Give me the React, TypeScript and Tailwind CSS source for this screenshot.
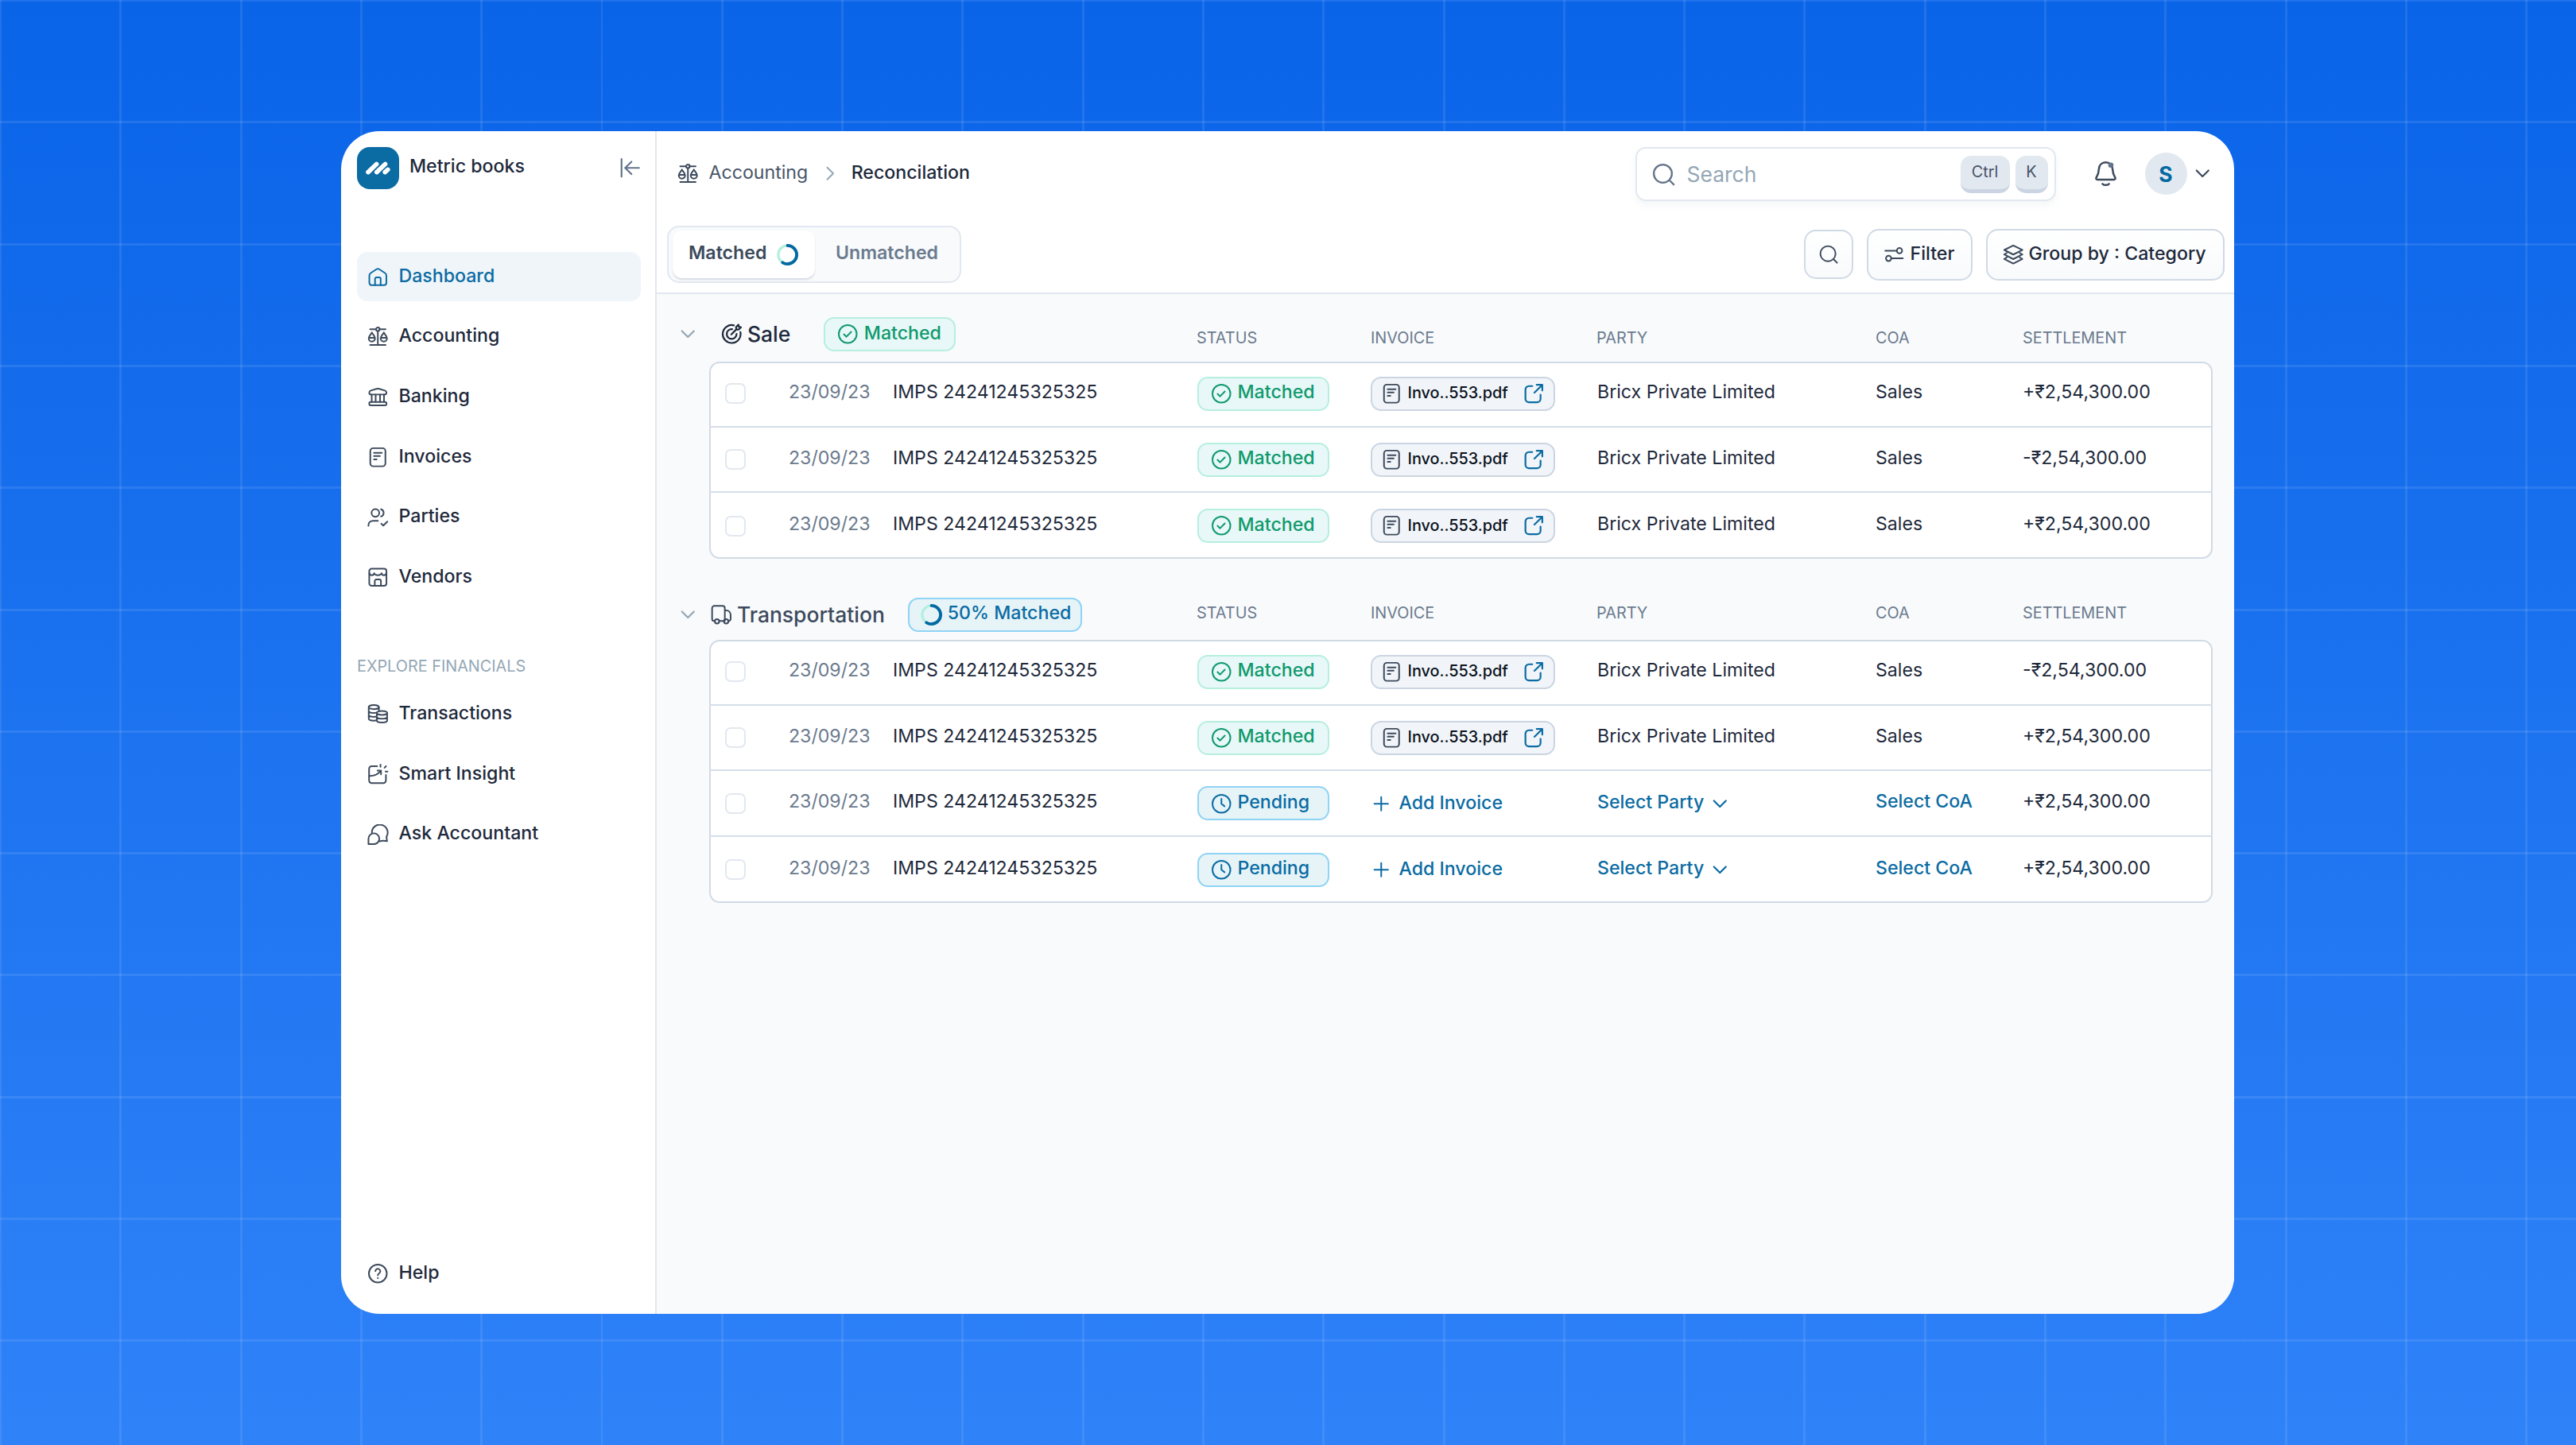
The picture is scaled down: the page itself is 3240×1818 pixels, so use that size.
import React from 'react';
import clsx from 'clsx';

type IconProps = { className?: string; children?: React.ReactNode };

function Icon({ className, children }: IconProps) {
  return (
    <svg
      viewBox="0 0 24 24"
      fill="none"
      stroke="currentColor"
      strokeWidth="1.8"
      strokeLinecap="round"
      strokeLinejoin="round"
      className={clsx('shrink-0', className?.includes('size-') ? '' : 'size-[26.5px]', className)}
    >
      {children}
    </svg>
  );
}

const HomeIcon = (p: IconProps) => (
  <Icon {...p}>
    <path d="M2.3 10.6c0-1.2.6-2.3 1.6-2.9l6.5-4.3a3 3 0 0 1 3.2 0l6.5 4.3c1 .6 1.6 1.7 1.6 2.9v8.2a2.8 2.8 0 0 1-2.8 2.8H5.1a2.8 2.8 0 0 1-2.8-2.8Z" />
    <path d="M8.8 21.6v-7.4a1.6 1.6 0 0 1 1.6-1.6h3.2a1.6 1.6 0 0 1 1.6 1.6v7.4" />
  </Icon>
);

const ScaleIcon = (p: IconProps) => (
  <Icon {...p}>
    <circle cx="12" cy="3.9" r="2" />
    <path d="M3.2 3.9H10M14 3.9h6.8M12 6v15.6M3.2 21.8h17.6" />
    <path d="M5.2 7.6c-.9 2.300-3.600 4-3.600 6.600a3.600 3.600 0 0 0 7.200 0c0-2.600-2.700-4.300-3.600-6.600ZM1.800 13.600h6.800" />
    <path d="M18.800 7.600c-.9 2.300-3.600 4-3.600 6.600a3.600 3.600 0 0 0 7.200 0c0-2.600-2.700-4.300-3.600-6.600ZM15.400 13.600h6.800" />
  </Icon>
);

const BankIcon = (p: IconProps) => (
  <Icon {...p}>
    <path d="M2.2 7.2c0-1.2.7-2 1.8-2.3l6.4-1.9a5.5 5.5 0 0 1 3.2 0L20 4.900c1.100.3 1.800 1.100 1.800 2.300 0 1.400-.8 2.200-2.200 2.200H4.400c-1.400 0-2.200-.8-2.200-2.200Z" />
    <rect x="2.2" y="17.8" width="19.6" height="4" rx="1.6" />
    <path d="M5 9.6v8M9.5 9.6v8M14.5 9.6v8M19 9.6v8" />
  </Icon>
);

const InvoiceIcon = (p: IconProps) => (
  <Icon {...p}>
    <rect x="3.4" y="1.7" width="17.2" height="20.6" rx="3.2" />
    <path d="M7.6 7h9M7.6 10.7h6.800M7.600 14.400h3" />
  </Icon>
);

const PartiesIcon = (p: IconProps) => (
  <Icon {...p}>
    <circle cx="9.2" cy="6.6" r="4.4" />
    <path d="M15.6 2.5a4.3 4.3 0 0 1 0 8.2M1.3 21.4v-.8c0-3 2.2-5 5.2-5h5.6M15.9 18.9l2.3 2.2 4.6-4.6" />
  </Icon>
);

const VendorIcon = (p: IconProps) => (
  <Icon {...p}>
    <rect x="2.2" y="2.2" width="19.6" height="19.6" rx="2.8" />
    <path d="M2.4 7.500c.3 1.500 1.400 2.200 2.700 2.200S7.500 9 7.800 7.500C8.300 9 9.500 9.700 12 9.700s3.700-.7 4.200-2.200c.3 1.500 1.400 2.200 2.700 2.200s2.400-.7 2.700-2.200" />
    <path d="M8.5 21.6v-5.3a1.8 1.8 0 0 1 1.8-1.8h3.4a1.8 1.8 0 0 1 1.8 1.8v5.3" />
  </Icon>
);

const CoinsIcon = (p: IconProps) => (
  <Icon {...p}>
    <ellipse cx="7.4" cy="4.2" rx="5.8" ry="2.3" />
    <path d="M1.6 4.2v13c0 1.4 2.3 2.4 5.8 2.4 1.2 0 2.3-.1 3.2-.4M13.2 4.2v3.6M1.6 8.6c0 1.3 2.6 2.3 5.8 2.3 1.2 0 2.3-.1 3.2-.4M1.6 13c0 1.3 2.6 2.3 5.8 2.3 1.2 0 2.3-.1 3.2-.4" />
    <ellipse cx="16.7" cy="10.8" rx="5.9" ry="2.3" />
    <path d="M10.8 10.8v8.7c0 1.3 2.6 2.3 5.9 2.3s5.9-1 5.9-2.3v-8.7M10.8 15.2c0 1.3 2.6 2.3 5.9 2.3s5.9-1 5.9-2.3" />
  </Icon>
);

const InsightIcon = (p: IconProps) => (
  <Icon {...p}>
    <path d="M11.2 2.7H5a3 3 0 0 0-3 3v13.2a3 3 0 0 0 3 3h13.2a3 3 0 0 0 3-3v-6.2" />
    <path d="M2.2 13.9c5.4.2 9.3-1.6 13-5.6M11.6 7.7h4v4.3M15 .9v2.5M21.3 2.7l-1.7 1.7M20.8 8.8h2.2" />
  </Icon>
);

const ChatIcon = (p: IconProps) => (
  <Icon {...p}>
    <path d="M5.2 9.5a9 9 0 1 1 16.9 4.300c-.3.600-.3 1-.2 1.600l.6 3.900-4-.5c-1.500-.2-2.500.5-4.600.6" />
    <path d="M1.3 22.7v-6.2a6.2 6.2 0 1 1 6.2 6.2Z" />
  </Icon>
);

const HelpIcon = (p: IconProps) => (
  <Icon {...p}>
    <circle cx="12" cy="12" r="10.2" />
    <path d="M9.2 9.3a2.8 2.8 0 1 1 4.3 2.500c-.9.600-1.500 1.200-1.500 2.200" />
    <path d="M12 17.200v.1" strokeWidth="2" />
  </Icon>
);

const CollapseIcon = (p: IconProps) => (
  <Icon {...p}>
    <path d="M2.5 2v20M22.5 12H6.8M13.8 5 6.6 12l7.2 7" strokeWidth="2" />
  </Icon>
);

const SearchIcon = (p: IconProps) => (
  <Icon {...p}>
    <circle cx="11.2" cy="11.2" r="8.8" />
    <path d="m17.8 17.8 4 4" />
  </Icon>
);

const ChevronDown = (p: IconProps) => (
  <Icon {...p}>
    <path d="m5.2 8.600 6.800 6.800 6.800-6.800" strokeWidth="2" />
  </Icon>
);

const ChevronRight = (p: IconProps) => (
  <Icon {...p}>
    <path d="m8.600 5.200 6.800 6.800-6.800 6.800" />
  </Icon>
);

const BellIcon = (p: IconProps) => (
  <Icon {...p}>
    <path d="M12 1.7c-3.6 0-6 2.4-6.2 5.8-.2 3.9-.9 5.6-2.4 8.1-.6 1 0 1.800 1 1.800h15.200c1 0 1.600-.8 1-1.800-1.500-2.500-2.200-4.200-2.400-8.100C18 4.100 15.600 1.700 12 1.700Z" />
    <path d="M9 21.300c1.500 1.500 4.500 1.500 6 0" />
    <circle cx="16.700" cy="4.200" r="2.400" className="fill-[#64748b]" stroke="none" />
  </Icon>
);

const FilterIcon = (p: IconProps) => (
  <Icon {...p}>
    <circle cx="18.2" cy="7.6" r="3" />
    <circle cx="5.8" cy="16.4" r="3" />
    <path d="M2 7.6h13M9 16.4h13" />
  </Icon>
);

const LayersIcon = (p: IconProps) => (
  <Icon {...p}>
    <path d="M12 1.6 22.3 6.8 12 12 1.7 6.8Z" />
    <path d="m4.6 10.2-2.9 1.7L12 17.2l10.3-5.3-2.9-1.7M4.6 15.3l-2.9 1.7L12 22.3l10.3-5.3-2.9-1.7" />
  </Icon>
);

const TargetIcon = (p: IconProps) => (
  <Icon {...p}>
    <path d="M14.5 2.1A10.2 10.2 0 1 0 22 9.9" strokeWidth="2" />
    <path d="M12.6 6.400a5.600 5.600 0 1 0 5 5.400" strokeWidth="2" />
    <path d="m11.600 12.500 5.700-5.800M17.300 6.700l-.3-2.600 2.700-2.700.5 2.400 2.400.5-2.700 2.700Z" strokeWidth="2" />
  </Icon>
);

const TruckIcon = (p: IconProps) => (
  <Icon {...p}>
    <path d="M4.6 19.3h-.8a2.3 2.3 0 0 1-2.3-2.3V4.7a2.6 2.6 0 0 1 2.6-2.6h9.3A2.6 2.6 0 0 1 16 4.7v14.6H9.600M16 7.300h1.600c2.900 0 5 2.300 5 5.200v4.500a2.300 2.300 0 0 1-2.300 2.300h-.3" />
    <circle cx="7.1" cy="19.6" r="2.5" />
    <circle cx="17.5" cy="19.6" r="2.5" />
  </Icon>
);

const CheckCircleIcon = (p: IconProps) => (
  <Icon {...p}>
    <circle cx="12" cy="12" r="10.2" />
    <path d="m7.6 12.3 2.9 2.8 5.4-5.6" />
  </Icon>
);

const ClockIcon = (p: IconProps) => (
  <Icon {...p}>
    <circle cx="12" cy="12" r="10.2" />
    <path d="M12 6.3V12l3.6 2.8" />
  </Icon>
);

const ExternalIcon = (p: IconProps) => (
  <Icon {...p}>
    <path d="M10.2 3.4H6.4a4 4 0 0 0-4 4v10.4a4 4 0 0 0 4 4h9.2a4 4 0 0 0 4-4v-4.6" strokeWidth="2" />
    <path d="m12.6 10.8 8.8-8.6M15.2 2h6.4v6.4" strokeWidth="2" />
  </Icon>
);

const PlusIcon = (p: IconProps) => (
  <Icon {...p}>
    <path d="M12 4.200v15.600M4.200 12h15.600" />
  </Icon>
);

function ProgressRing() {
  return (
    <svg viewBox="0 0 27 27" fill="none" className="size-[27px] shrink-0 -rotate-90">
      <circle cx="13.5" cy="13.5" r="11.6" stroke="#b6efdf" strokeWidth="3.4" />
      <circle cx="13.5" cy="13.5" r="11.6" stroke="#0369a1" strokeWidth="3.8" pathLength="100" strokeDasharray="59 100" strokeLinecap="round" />
    </svg>
  );
}

function Logo() {
  return (
    <div className="size-[53px] rounded-[16px] bg-[#0b6ba3]">
      <svg viewBox="0 0 53 53" fill="none" strokeLinecap="round" className="size-full">
        <path d="m35.2 31.6 3.6-3.2" stroke="#fff" strokeWidth="5.6" />
        <path d="m24.8 31.6 11.4-10.4" stroke="#0b6ba3" strokeWidth="7" />
        <path d="m24.8 31.6 10.7-10.1" stroke="#fff" strokeWidth="5.6" />
        <path d="m14 31.6 11-10.1" stroke="#0b6ba3" strokeWidth="7" />
        <path d="m14 31.6 10.6-10.1" stroke="#fff" strokeWidth="5.6" />
      </svg>
    </div>
  );
}

type NavEntry = { label: string; icon: React.FC<IconProps>; active?: boolean };

const mainNav: NavEntry[] = [
  { label: 'Dashboard', icon: HomeIcon, active: true },
  { label: 'Accounting', icon: ScaleIcon },
  { label: 'Banking', icon: BankIcon },
  { label: 'Invoices', icon: InvoiceIcon },
  { label: 'Parties', icon: PartiesIcon },
  { label: 'Vendors', icon: VendorIcon },
];

const exploreNav: NavEntry[] = [
  { label: 'Transactions', icon: CoinsIcon },
  { label: 'Smart Insight', icon: InsightIcon },
  { label: 'Ask Accountant', icon: ChatIcon },
];

function NavItem({ label, icon: NavIcon, active }: NavEntry) {
  return (
    <a
      className={clsx(
        'flex h-[62px] items-center gap-[13px] rounded-[13px] px-[13px] font-medium',
        active ? 'bg-[#f0f5fa] text-[#0b6ba3]' : 'text-[#1e293b]',
      )}
    >
      <NavIcon className={active ? '' : 'text-[#3d4a5c]'} />
      <span className="pb-[3px]">{label}</span>
    </a>
  );
}

function Sidebar() {
  return (
    <aside className="flex w-[397px] shrink-0 flex-col border-r-2 border-[#e2e8f0] pr-[18px] pl-5">
      <div className="mt-5 flex h-[53px] items-center">
        <Logo />
        <span className="ml-[13px] pb-[5px] font-medium text-[#1e293b]">Metric books</span>
        <CollapseIcon className="mr-px ml-auto text-[#64748b]" />
      </div>
      <nav className="mt-[79px] flex flex-col gap-[13.7px]">
        {mainNav.map((n) => (
          <NavItem key={n.label} {...n} />
        ))}
      </nav>
      <div className="mt-[69px] h-[24px] text-[19.84px] leading-[24px] text-[#94a7b5]">
        EXPLORE FINANCIALS
      </div>
      <nav className="mt-[17px] flex flex-col gap-[13.7px]">
        {exploreNav.map((n) => (
          <NavItem key={n.label} {...n} />
        ))}
      </nav>
      <div className="mt-auto mb-5">
        <NavItem label="Help" icon={HelpIcon} />
      </div>
    </aside>
  );
}

function TopBar() {
  return (
    <div className="flex h-[106px] items-center pr-[27px] pl-[26px]">
      <ScaleIcon className="text-[#3d4a5c]" />
      <span className="ml-[13px] pb-[2px] text-[#475569]">Accounting</span>
      <ChevronRight className="ml-[15px] text-[#94a7b5]" />
      <span className="ml-[13px] pb-[2px] font-medium text-[#1e293b]">Reconcilation</span>

      <div className="mt-[2px] ml-auto flex h-[68px] w-[529px] items-center rounded-[13px] border-2 border-[#e2e8f0] pr-2 pl-[18px] text-[26.46px] text-[#94a7b5] shadow-[0_5px_8px_rgba(148,167,181,0.1)]">
        <SearchIcon className="size-[31px] text-[#64748b]" />
        <span className="ml-[14px]">Search</span>
        <kbd className="ml-auto flex h-[47px] w-[62px] items-start justify-center rounded-[13px] border-b-[5px] border-[#cbd5e1] bg-[#e2e8f0] pt-[8px] font-[Inter,sans-serif] text-[19.84px] leading-[24px] text-[#475569]">
          Ctrl
        </kbd>
        <kbd className="ml-[7px] flex h-[47px] w-[41px] items-start justify-center rounded-[13px] border-b-[5px] border-[#cbd5e1] bg-[#e2e8f0] pt-[8px] font-[Inter,sans-serif] text-[19.84px] leading-[24px] text-[#475569]">
          K
        </kbd>
      </div>

      <BellIcon className="ml-[46px] size-[33px] text-[#3d4a5c]" />
      <div className="ml-[33px] flex size-[53px] items-center justify-center rounded-full bg-[#e2e8f0] pt-px text-[26.46px] font-bold text-[#0369a1]">
        S
      </div>
      <ChevronDown className="ml-[6px] text-[#3d4a5c]" />
    </div>
  );
}

function Toolbar() {
  return (
    <div className="flex h-[99px] items-center border-b-2 border-[#e2e8f0] pt-px pr-[12px] pl-[13px] font-medium">
      <div className="flex h-[72px] w-[370px] items-center rounded-[15px] border-2 border-[#e2e8f0] bg-[#f8fafc] pl-[5px]">
        <div className="flex h-[60px] w-[179px] items-center rounded-[12px] bg-white pl-5 font-semibold text-[#3d4a5c] shadow-[0_2px_2px_rgba(148,163,184,0.35)]">
          <span className="pb-1">Matched</span>
          <div className="ml-[13px]">
            <ProgressRing />
          </div>
        </div>
        <div className="ml-[26px] pb-1 font-semibold text-[#6b7a8d]">Unmatched</div>
      </div>
      <button className="ml-auto flex size-[62px] items-center justify-center rounded-[15px] border-2 border-[#d0dae5] bg-linear-to-b from-white to-[#f8fafc] text-[#3d4a5c]">
        <SearchIcon className="size-[26px]" />
      </button>
      <button className="ml-[17px] flex h-[65px] w-[133px] items-center rounded-[15px] border-2 border-[#d0dae5] bg-linear-to-b from-white to-[#f8fafc] pl-[19px] text-[#1e293b]">
        <FilterIcon className="text-[#3d4a5c]" />
        <span className="ml-[7px] pb-[3px]">Filter</span>
      </button>
      <button className="ml-[17px] flex h-[65px] w-[300px] items-center rounded-[15px] border-2 border-[#d0dae5] bg-linear-to-b from-white to-[#f8fafc] pl-[19px] text-[#1e293b]">
        <LayersIcon className="text-[#3d4a5c]" />
        <span className="ml-[6px] pb-[3px]">Group by : Category</span>
      </button>
    </div>
  );
}

function MatchedBadge() {
  return (
    <div className="flex h-[43px] w-[166px] items-center gap-[7px] rounded-[13px] border-2 border-[#b6efdf] bg-[#e8f7f8] pl-[15px] font-medium text-[#0f9a6c]">
      <CheckCircleIcon />
      <span className="pb-1">Matched</span>
    </div>
  );
}

function PendingBadge() {
  return (
    <div className="flex h-[43px] w-[166px] items-center gap-[7px] rounded-[13px] border-2 border-[#8fd3f5] bg-[#e6f4f8] pl-[15px] font-medium text-[#0b6ba3]">
      <ClockIcon />
      <span className="pb-1">Pending</span>
    </div>
  );
}

function InvoiceChip() {
  return (
    <div className="flex h-[43px] w-[232px] items-center rounded-[13px] border-2 border-[#cbd5e1] bg-[#f1f5f9] pl-[11px] text-[19.84px] font-medium text-[#0b1220]">
      <InvoiceIcon className="text-[#3d4a5c]" />
      <span className="ml-[7px] pb-0.5">Invo..553.pdf</span>
      <ExternalIcon className="mr-[12px] ml-auto text-[#0b6ba3]" />
    </div>
  );
}

type Row = { amount: string; matched: boolean };

function TableRow({ amount, matched }: Row) {
  return (
    <div className="flex h-[82.7px] items-center border-b-2 border-[#d5dee8] text-[#1e293b] last:border-b-0">
      <div className="flex w-[614px] items-center pl-[20px]">
        <div className="size-[26px] rounded-[7px] border-2 border-[#e2e8f0]" />
        <span className="ml-[54px] w-[131px] pb-[5px] text-[#6b7a8d]">23/09/23</span>
        <span className="pb-[5px]">IMPS 24241245325325</span>
      </div>
      <div className="w-[218px]">{matched ? <MatchedBadge /> : <PendingBadge />}</div>
      <div className="w-[285px]">
        {matched ? (
          <InvoiceChip />
        ) : (
          <div className="flex items-center font-medium text-[#0b6ba3]">
            <PlusIcon />
            <span className="ml-[9px] pb-[2px]">Add Invoice</span>
          </div>
        )}
      </div>
      {matched ? (
        <div className="w-[350px] pb-[5px]">Bricx Private Limited</div>
      ) : (
        <div className="flex w-[350px] items-center font-medium text-[#0b6ba3]">
          <span className="pb-[4px]">Select Party</span>
          <ChevronDown className="ml-[7px]" />
        </div>
      )}
      <div className="w-[185px] pb-[5px]">
        {matched ? 'Sales' : <span className="font-medium text-[#0b6ba3]">Select CoA</span>}
      </div>
      <div className="pb-[5px]">{amount}</div>
    </div>
  );
}

function ColumnHeads({ className }: { className?: string }) {
  return (
    <div className={clsx('flex text-[19.84px] leading-[24px] text-[#6b7a8d]', className)}>
      <div className="w-[219px]">STATUS</div>
      <div className="w-[284px]">INVOICE</div>
      <div className="w-[351px]">PARTY</div>
      <div className="w-[185px]">COA</div>
      <div>SETTLEMENT</div>
    </div>
  );
}

function Rows({ rows }: { rows: Row[] }) {
  return (
    <div className="mr-[27px] ml-[66px] flex flex-col rounded-[13px] bg-white inset-ring-2 inset-ring-[#d0dae5]">
      {rows.map((r, i) => (
        <TableRow key={i} {...r} />
      ))}
    </div>
  );
}

const saleRows: Row[] = [
  { amount: '+₹2,54,300.00', matched: true },
  { amount: '-₹2,54,300.00', matched: true },
  { amount: '+₹2,54,300.00', matched: true },
];

const transportRows: Row[] = [
  { amount: '-₹2,54,300.00', matched: true },
  { amount: '+₹2,54,300.00', matched: true },
  { amount: '+₹2,54,300.00', matched: false },
  { amount: '+₹2,54,300.00', matched: false },
];

export default function App() {
  return (
    <div className="flex h-[1818px] w-[3240px] items-start bg-[repeating-linear-gradient(90deg,rgba(255,255,255,0.09)_0_2px,transparent_2px_150.3px,rgba(255,255,255,0.09)_150.3px_151.3px),repeating-linear-gradient(180deg,rgba(255,255,255,0.09)_0_2px,transparent_2px_152.3px,rgba(255,255,255,0.09)_152.3px_153.3px),linear-gradient(180deg,#0a64e8,#2f82f8)] pt-[165px] pl-[429px] font-[Inter,sans-serif] text-[23.15px] leading-[28px]">
      <div className="flex h-[1488px] w-[2381px] overflow-hidden rounded-[48px] bg-white">
        <Sidebar />
        <main className="flex min-w-0 flex-1 flex-col">
          <TopBar />
          <Toolbar />
          <div className="flex-1 bg-[#f8fafc]">
            <div className="flex h-[85px] items-center pt-[16px]">
              <div className="flex w-[679px] items-center pl-[26px]">
                <ChevronDown className="text-[#94a7b5]" />
                <TargetIcon className="ml-[28px] text-[#1e293b]" />
                <span className="mr-[42px] ml-[7px] pb-[2px] text-[26.46px] font-medium text-[#1e293b]">Sale</span>
                <MatchedBadge />
              </div>
              <ColumnHeads className="pt-[9px]" />
            </div>
            <Rows rows={saleRows} />

            <div className="flex h-[102px] items-center pt-[39px]">
              <div className="flex w-[679px] items-center pl-[26px]">
                <ChevronDown className="text-[#94a7b5]" />
                <TruckIcon className="ml-[15px] text-[#3d4a5c]" />
                <span className="mr-[29px] ml-[7px] pb-[2px] text-[26.46px] font-medium text-[#3d4a5c]">Transportation</span>
                <div className="flex h-[43px] w-[219px] items-center gap-[7px] rounded-[13px] border-2 border-[#8fd3f5] bg-[#e6f4f8] pl-[14px] font-medium text-[#0b6ba3]">
                  <ProgressRing />
                  <span className="pb-[5px]">50% Matched</span>
                </div>
              </div>
              <ColumnHeads className="pb-[6px]" />
            </div>
            <Rows rows={transportRows} />
          </div>
        </main>
      </div>
    </div>
  );
}
